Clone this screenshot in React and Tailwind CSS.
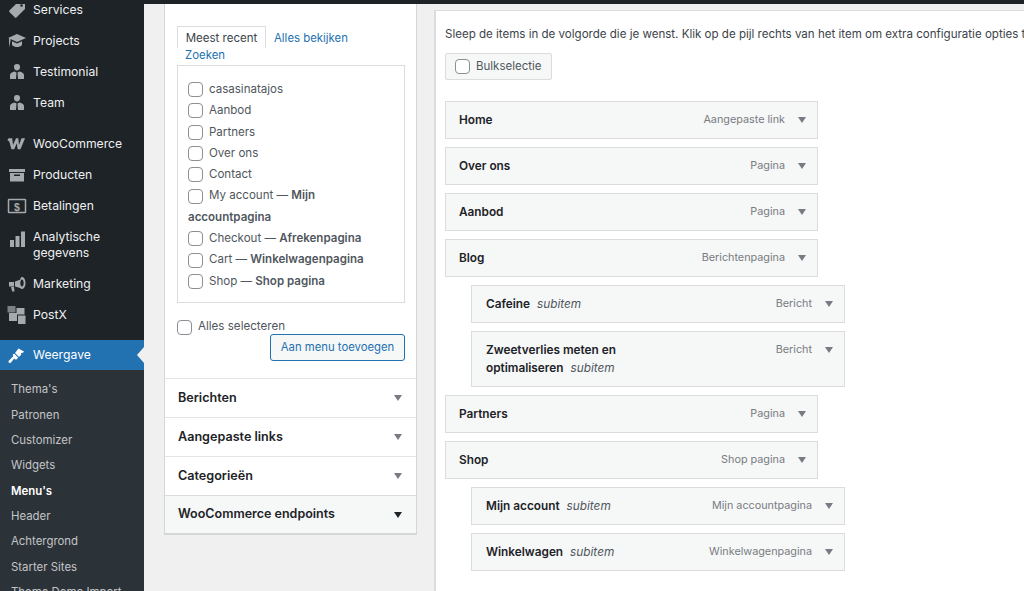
const Tag = () => (<svg viewBox="0 0 20 20" className="w-[20px] h-[20px]" fill="currentColor"><path d="M11 2h6.200c.5 0 .8.3.8.8V9l-8.600 8.600c-.4.4-1 .4-1.400 0l-5.600-5.600c-.4-.4-.4-1 0-1.400L11 2zm3.500 2.200a1.300 1.300 0 100 2.600 1.300 1.300 0 000-2.600z" fillRule="evenodd"/></svg>);
const Cap = () => (<svg viewBox="0 0 20 20" className="w-[20px] h-[20px]" fill="currentColor"><path d="M10 3l9 4-9 4-6.500-2.900V10L2 16.500V7.200L1 7l9-4z"/><path d="M5 10.200l5 2.200 5-2.200V14c-1.200 1.400-3 2-5 2s-3.300-.5-5-2v-3.800z"/></svg>);
const Person = () => (<svg viewBox="0 0 20 20" className="w-[20px] h-[20px]" fill="currentColor"><path d="M10 2a3 3 0 013 3.200C13 7 11.700 8.500 10 8.500S7 7 7 5.200A3 3 0 0110 2z"/><path d="M7.500 9.500l2 1-.5 6.500H3.500C3 17 3 16.500 3 16v-3c0-2 2.500-3 4.500-3.500zM12.500 9.500c2 .5 4.500 1.500 4.500 3.500v3c0 .5 0 1-.5 1H11l-.5-6.500 2-1z"/></svg>);
const Woo = () => (<svg viewBox="0 0 20 12" className="w-[19px] h-[12px]" fill="currentColor"><path d="M2.500 0h3l.8 7L9.500 0h2.400l.7 7 2.700-7H19l-4.800 11.500h-3l-.9-6.200-2.700 6.200h-3L2.500 3.500 .7 2C.5 1 1.200 0 2.500 0z"/></svg>);
const Archive = () => (<svg viewBox="0 0 20 20" className="w-[20px] h-[20px]" fill="currentColor"><path d="M2 4h16v3H2zM3 8h14v8.500H3zm4 1.500V11h6V9.500z" fillRule="evenodd"/></svg>);
const Money = () => (<svg viewBox="0 0 20 20" className="w-[20px] h-[20px]" fill="none" stroke="currentColor"><rect x="1.500" y="3.500" width="17" height="13" rx="0.500" strokeWidth="1.500"/><text x="10" y="14.500" textAnchor="middle" fontSize="10.500" fontWeight="700" fill="currentColor" stroke="none" fontFamily="Liberation Sans, sans-serif">$</text></svg>);
const Bars = () => (<svg viewBox="0 0 20 20" className="w-[20px] h-[20px]" fill="currentColor"><rect x="3" y="11" width="4" height="7"/><rect x="8.500" y="7" width="4" height="11"/><rect x="14" y="2.500" width="4" height="15.500"/></svg>);
const Megaphone = () => (<svg viewBox="0 0 20 20" className="w-[20px] h-[20px]" fill="currentColor"><path d="M18.500 9c0 3.500-1.600 6-3.500 6-.7 0-1.300-.3-1.900-.9L8 12.600V7.500l5.100-1.700C13.700 3.300 14.300 3 15 3c1.900 0 3.500 2.500 3.500 6zm-3.500 3.500c.9 0 1.700-1.600 1.700-3.500S15.900 5.500 15 5.500 13.300 7.100 13.300 9s.8 3.500 1.700 3.500z" fillRule="evenodd"/><path d="M2 8h5v4.500H2zM4 13h3l.5 4.500H5.200z"/></svg>);
const Squares = () => (<svg viewBox="0 0 20 20" className="w-[20px] h-[20px]" fill="currentColor"><rect x="0.500" y="1" width="8" height="6.500" opacity="0.700"/><rect x="9.500" y="3" width="8" height="6.500"/><rect x="2" y="8" width="8" height="8"/><rect x="11" y="10.500" width="7.500" height="8.500"/></svg>);
const Brush = () => (<svg viewBox="0 0 20 20" className="w-[20px] h-[20px]" fill="currentColor"><path d="M11.500 3.500l5.500 3-1 1.300-2 .2.300 1.500L12 12 8 8l3.500-4.500zM7.300 8.800l3.900 3.900-1.700 1.700c-1 .4-1.800-.5-2.300-1L3.800 17.800c-.6.500-1.600.3-2-.2-.5-.5-.5-1.200 0-1.800L6.500 11c-.6-.5-1-1-.6-1.700l1.400-.5z"/></svg>);

const mainItems = [
  ["Services", Tag, "h-[31px]"],
  ["Projects", Cap, "h-[31px]"],
  ["Testimonial", Person, "h-[31px]"],
  ["Team", Person, "h-[31px] mb-[10px]"],
  ["WooCommerce", Woo, "h-[31px]"],
  ["Producten", Archive, "h-[31px]"],
  ["Betalingen", Money, "h-[31px]"],
];
const subItems = ["Thema's", "Patronen", "Customizer", "Widgets", "Menu's", "Header", "Achtergrond", "Starter Sites", "Theme Demo Import"];

function SideRow({ label, Icon, cls }) {
  return (
    <div className={`flex items-center shrink-0 text-[#f0f0f1] ${cls}`}>
      <span className="w-[33px] pl-[7px] flex justify-start items-center text-[#a7aaad] shrink-0"><Icon /></span>
      <span className="text-[12.200px] leading-[16px]">{label}</span>
    </div>
  );
}

function Sidebar() {
  return (
    <aside className="w-[144px] shrink-0 bg-[#1d2327] flex flex-col -mt-[10px]">
      {mainItems.map(([l, I, c]) => <SideRow key={l} label={l} Icon={I} cls={c} />)}
      <div className="flex shrink-0 text-[#f0f0f1] h-[47px] pt-[8px]">
        <span className="w-[33px] pl-[7px] text-[#a7aaad] shrink-0"><Bars /></span>
        <span className="text-[12.200px] leading-[16px]">Analytische<br />gegevens</span>
      </div>
      <SideRow label="Marketing" Icon={Megaphone} cls="h-[31px]" />
      <SideRow label="PostX" Icon={Squares} cls="h-[31px] mb-[10px]" />
      <div className="relative flex shrink-0 items-center h-[30px] bg-[#2271b1] text-white">
        <span className="w-[33px] pl-[7px] shrink-0"><Brush /></span>
        <span className="text-[12.200px] leading-[16px]">Weergave</span>
        <span className="absolute right-0 top-[7px] w-0 h-0 border-y-[8px] border-y-transparent border-r-[7px] border-r-[#f0f0f1]" />
      </div>
      <div className="bg-[#2c3338] pt-[7px] flex-1">
        {subItems.map((s) => (
          <div key={s} className={`h-[25.400px] flex items-center pl-[11px] text-[11.400px] whitespace-nowrap ${s === "Menu's" ? "font-semibold text-white" : "text-[#c3c4c7]"}`}>{s}</div>
        ))}
      </div>
    </aside>
  );
}

const Box = () => <span className="inline-block w-[15px] h-[15px] rounded-[4px] border border-[#8c8f94] bg-white shrink-0" />;

const recents = ["casasinatajos", "Aanbod", "Partners", "Over ons", "Contact"];
const withPage = [
  ["Checkout", "Afrekenpagina"],
  ["Cart", "Winkelwagenpagina"],
  ["Shop", "Shop pagina"],
];

const Arrow = ({ dark }) => <span className={`block w-0 h-0 border-x-[4.500px] border-x-transparent border-t-[6px] ${dark ? "border-t-[#1d2327]" : "border-t-[#787c82]"}`} />;

function CheckRow({ children }) {
  return <div className="flex items-center gap-[6px] h-[21.300px] text-[11.550px] text-[#50575e] whitespace-nowrap"><Box />
    <span>{children}</span></div>;
}

function LeftPanel() {
  return (
    <section className="w-[253px] h-[531px] shrink-0 bg-white border-x border-b-2 border-[#d4d6d8] flex flex-col">
      <div className="px-[12px] pt-[22px] h-[374px] shrink-0">
        <div className="flex items-start text-[11.400px] h-[21px]">
          <div className="h-[22px] w-[89px] pt-[2px] border border-b-0 border-[#dcdcde] flex items-center justify-center text-[#3c434a] bg-white text-[11.500px]">Meest recent</div>
          <a className="ml-[8px] pt-[2px] leading-[21px] text-[#2271b1]">Alles bekijken</a>
        </div>
        <div className="pl-[8px] text-[11.400px] leading-[16px] text-[#2271b1]">Zoeken</div>
        <div className="border border-[#dcdcde] h-[238px] w-[228px] mt-[2px] pl-[10px] pt-[13px]">
          {recents.map((l) => <CheckRow key={l}>{l}</CheckRow>)}
          <CheckRow>My account — <b className="font-semibold">Mijn</b></CheckRow>
          <div className="h-[21.300px] flex items-center text-[11.550px] font-semibold text-[#50575e]">accountpagina</div>
          {withPage.map(([a, b]) => <CheckRow key={a}>{a} — <b className="font-semibold">{b}</b></CheckRow>)}
        </div>
        <div className="flex items-center gap-[6px] mt-[16px] h-[16px] text-[11.600px] text-[#50575e]"><Box />Alles selecteren</div>
        <div className="flex justify-end -mt-[1px] w-[228px]">
          <button className="w-[135px] h-[27px] rounded-[3px] border border-[#2271b1] bg-[#f6f7f7] text-[#2271b1] text-[11.300px]">Aan menu toevoegen</button>
        </div>
      </div>
      {["Berichten", "Aangepaste links", "Categorieën"].map((t) => (
        <div key={t} className="h-[39px] shrink-0 border-t border-[#e3e4e5] flex items-center justify-between pl-[13px] pr-[14px]">
          <span className="text-[12.600px] font-semibold text-[#1d2327]">{t}</span><Arrow />
        </div>
      ))}
      <div className="flex-1 border-t border-[#dcdcde] bg-[#f6f7f7] flex items-center justify-between pl-[13px] pr-[14px]">
        <span className="text-[12.500px] font-semibold text-[#1d2327]">WooCommerce endpoints</span><Arrow dark />
      </div>
    </section>
  );
}

function MenuItem({ title, sub, type, nested, tall }) {
  return (
    <div className={`${nested ? "ml-[26px] w-[374px] pl-[14px]" : "w-[373px] pl-[13px]"} ${tall ? "h-[56px]" : "h-[38px]"} border border-[#dcdcde] bg-[#f6f7f7] flex justify-between pr-[11px] pt-[9px] shrink-0`}>
      <div className="text-[11.800px] leading-[18px] text-[#1d2327]">
        <b className="font-semibold">{title}</b>
        {sub && <i className="ml-[7px] text-[#50575e]">subitem</i>}
      </div>
      <div className="flex items-start gap-[13px] shrink-0">
        <span className="text-[10.800px] leading-[18px] text-[#787c82]">{type}</span>
        <span className="mt-[6px]"><Arrow /></span>
      </div>
    </div>
  );
}

function RightPanel() {
  return (
    <section className="flex-1 self-stretch min-w-0 mt-[6px] bg-white border-l-2 border-t border-[#dcdcde] pl-[9px] pt-[14px] overflow-hidden">
      <p className="text-[11.550px] leading-[18px] text-[#3c434a] whitespace-nowrap">Sleep de items in de volgorde die je wenst. Klik op de pijl rechts van het item om extra configuratie opties te zien.</p>
      <div className="mt-[10px] w-[107px] h-[27px] rounded-[2px] border border-[#dcdcde] bg-[#f6f7f7] flex items-center gap-[6px] pl-[9px] text-[11.500px] text-[#50575e]"><Box /><span className="pt-[1px]">Bulkselectie</span></div>
      <div className="mt-[21px] flex flex-col gap-[8px]">
        <MenuItem title="Home" type="Aangepaste link" />
        <MenuItem title="Over ons" type="Pagina" />
        <MenuItem title="Aanbod" type="Pagina" />
        <MenuItem title="Blog" type="Berichtenpagina" />
        <MenuItem nested sub title="Cafeine" type="Bericht" />
        <MenuItem nested tall sub title={<>Zweetverlies meten en<br />optimaliseren</>} type="Bericht" />
        <MenuItem title="Partners" type="Pagina" />
        <MenuItem title="Shop" type="Shop pagina" />
        <MenuItem nested sub title="Mijn account" type="Mijn accountpagina" />
        <MenuItem nested sub title="Winkelwagen" type="Winkelwagenpagina" />
      </div>
    </section>
  );
}

export default function App() {
  return (
    <div className="h-[591px] w-[1024px] overflow-hidden flex flex-col bg-[#f0f0f1] font-['Inter','Liberation_Sans',sans-serif]">
      <div className="h-[4px] bg-[#1d2327] shrink-0 relative z-10" />
      <div className="flex flex-1 min-h-0">
        <Sidebar />
        <main className="flex-1 min-w-0 flex items-start pl-[20px] gap-[17px]">
          <LeftPanel />
          <RightPanel />
        </main>
      </div>
    </div>
  );
}
